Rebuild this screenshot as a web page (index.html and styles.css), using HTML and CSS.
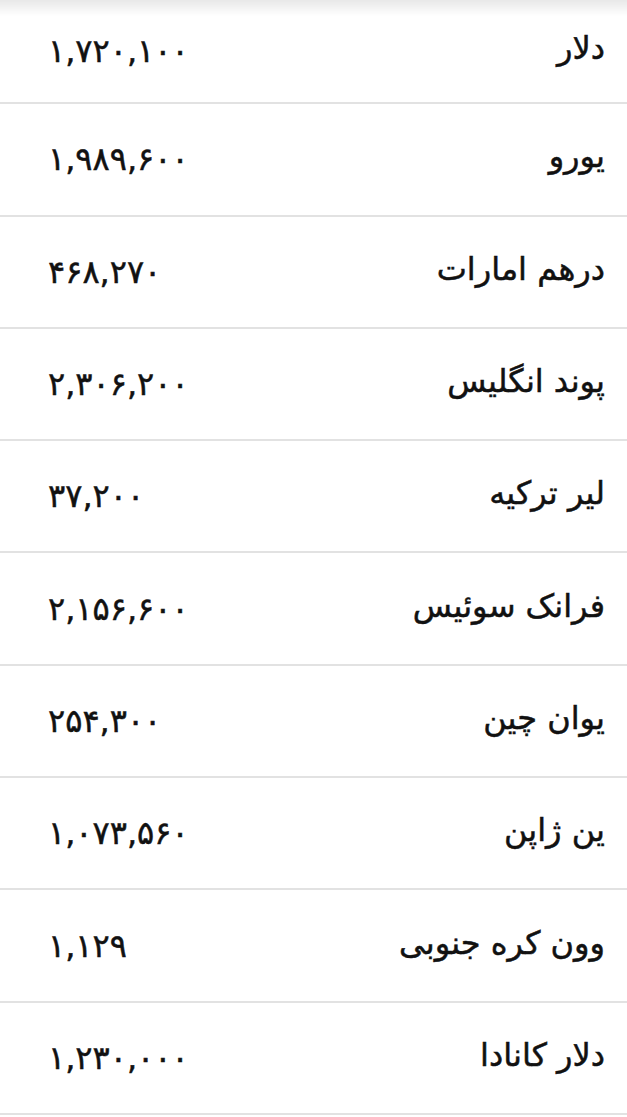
FILE: index.html
```html
<!DOCTYPE html>
<html lang="fa" dir="rtl">
<head>
    <meta charset="utf-8">
    <title>نرخ ارز</title>
    <link rel="stylesheet" href="styles.css">
</head>
<body>

<!-- shadow of the toolbar above the list -->
<div class="bar-shadow"></div>

<!-- Currency list -->
<ul class="rates">
    <li class="rate"><span class="name">دلار</span><span class="price">۱,۷۲۰,۱۰۰</span></li>
    <li class="rate"><span class="name">یورو</span><span class="price">۱,۹۸۹,۶۰۰</span></li>
    <li class="rate"><span class="name">درهم امارات</span><span class="price">۴۶۸,۲۷۰</span></li>
    <li class="rate"><span class="name">پوند انگلیس</span><span class="price">۲,۳۰۶,۲۰۰</span></li>
    <li class="rate"><span class="name">لیر ترکیه</span><span class="price">۳۷,۲۰۰</span></li>
    <li class="rate"><span class="name">فرانک سوئیس</span><span class="price">۲,۱۵۶,۶۰۰</span></li>
    <li class="rate"><span class="name">یوان چین</span><span class="price">۲۵۴,۳۰۰</span></li>
    <li class="rate"><span class="name">ین ژاپن</span><span class="price">۱,۰۷۳,۵۶۰</span></li>
    <li class="rate"><span class="name">وون کره جنوبی</span><span class="price">۱,۱۲۹</span></li>
    <li class="rate"><span class="name">دلار کانادا</span><span class="price">۱,۲۳۰,۰۰۰</span></li>
</ul>

</body>
</html>
```

FILE: styles.css
```css
body {
    margin: 0;
    background: #fff;
    color: #111;
    font-family: "DejaVu Sans", sans-serif;
}

.bar-shadow {
    position: fixed;
    top: 0;
    left: 0;
    right: 0;
    height: 16px;
    background: linear-gradient(rgba(0, 0, 0, 0.09), rgba(0, 0, 0, 0));
}

.rates {
    list-style: none;
    margin: 0;
    padding: 0;
}

.rate {
    display: flex;
    justify-content: space-between;
    align-items: center;
    height: 110.3px;
    padding: 0 22px 0 48px;
    border-bottom: 2px solid #e2e2e2;
    box-sizing: content-box;
}

.rate:first-child {
    height: 102.3px; /* first row is partly under the toolbar */
}

.name {
    font-size: 32px;
    -webkit-text-stroke: 0.5px #111;
    margin-top: -6px;
}

.price {
    direction: ltr;
    font-size: 32px;
    -webkit-text-stroke: 0.5px #111;
}
```
